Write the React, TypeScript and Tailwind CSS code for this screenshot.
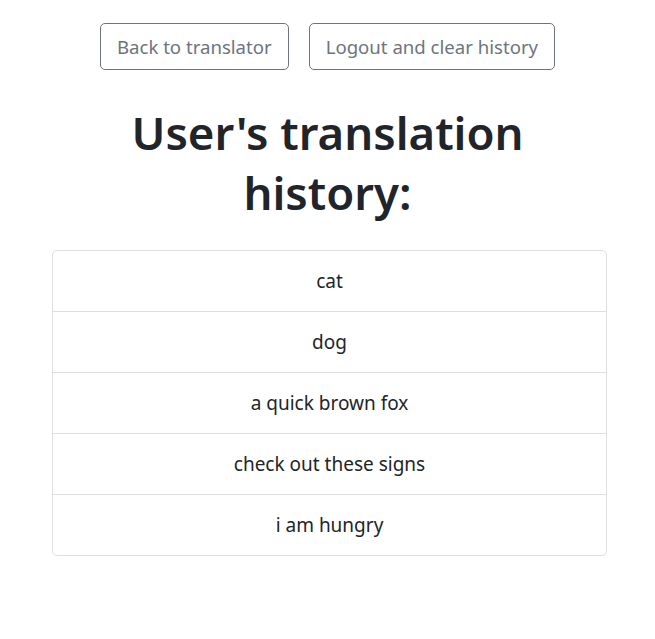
const history = ["cat", "dog", "a quick brown fox", "check out these signs", "i am hungry"];

export default function App() {
  return (
    <div className="min-h-screen bg-white text-[#212529] font-['Noto_Sans',sans-serif]">
      <div className="flex justify-center gap-5 pt-[23px]">
        <button className="h-[47px] px-4 rounded-[5px] border border-[#6c757d] text-[#6c757d] text-[18.6px] leading-[30px]">
          Back to translator
        </button>
        <button className="h-[47px] px-4 rounded-[5px] border border-[#6c757d] text-[#6c757d] text-[18.6px] leading-[30px]">
          Logout and clear history
        </button>
      </div>
      <h1 className="mx-auto mt-[32px] w-[420px] text-center text-[45.5px] leading-[60px] font-semibold">
        User's translation history:
      </h1>
      <ul className="mx-[52px] mt-[28px] w-[555px] rounded-[5px] border border-[#dfdfdf]">
        {history.map((item, i) => (
          <li
            key={item}
            className={`py-[15px] text-center text-[19px] leading-[30px] ${i > 0 ? "border-t border-[#dfdfdf]" : ""}`}
          >
            {item}
          </li>
        ))}
      </ul>
    </div>
  );
}
